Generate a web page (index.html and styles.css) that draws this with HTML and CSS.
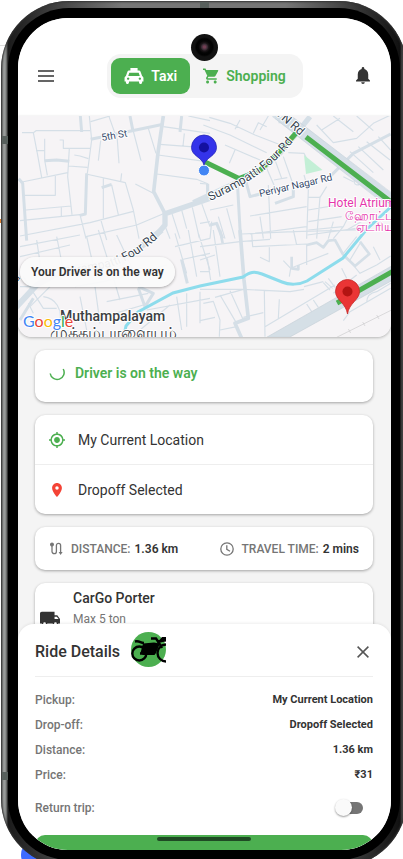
FILE: index.html
```html
<!DOCTYPE html>
<html lang="en">
<head>
<meta charset="utf-8">
<meta name="viewport" content="width=device-width, initial-scale=1">
<title>Taxi ride</title>
<link rel="stylesheet" href="styles.css">
</head>
<body>
<div class="blob"></div>
<div class="phone">
<span class="band band-top"></span><span class="band band-left"></span><span class="band band-low"></span>
<div class="bezel">
<main class="screen">
  <header class="topbar">
    <button class="icon-btn" aria-label="Menu"><svg width="16" height="12" viewBox="0 0 16 12"><path d="M0 1h16M0 6h16M0 11h16" stroke="#333" stroke-width="1.700"/></svg></button>
    <nav class="switch">
      <button class="tab active"><svg width="20" height="18" viewBox="0 0 22 20" fill="#fff"><path fill-rule="evenodd" d="M7 1h8v3h1.400c1 0 1.600.6 2 1.600L20 10c1 .5 1.500 1.300 1.500 2.500V16H20v1.200c0 2.200-3.400 2.200-3.400 0V16H5.400v1.200c0 2.200-3.400 2.200-3.400 0V16H.5v-3.500C.5 11.300 1 10.500 2 10l1.600-4.400C4 4.600 4.600 4 5.600 4H7zM5.800 6.500 4.600 10h12.800l-1.200-3.500zM4.500 11.700a1.300 1.300 0 1 0 .01 0zm13 0a1.300 1.300 0 1 0 .01 0z"/></svg>Taxi</button>
      <button class="tab"><svg width="16" height="16" viewBox="1 2 21 20" fill="#4caf50"><path d="M7 18c-1.100 0-1.990.9-1.990 2S5.900 22 7 22s2-.9 2-2-.9-2-2-2zM1 2v2h2l3.600 7.590-1.350 2.450c-.16.28-.25.61-.25.96 0 1.100.9 2 2 2h12v-2H7.420c-.14 0-.25-.11-.25-.25l.03-.12.9-1.630h7.450c.75 0 1.410-.41 1.750-1.030l3.580-6.490A1 1 0 0 0 20 4H5.210l-.94-2H1zm16 16c-1.100 0-1.990.9-1.990 2s.89 2 1.990 2 2-.9 2-2-.9-2-2-2z"/></svg>Shopping</button>
    </nav>
    <button class="icon-btn" aria-label="Notifications"><svg width="14" height="17" viewBox="4 2.500 16 19.500" fill="#333"><path d="M12 22c1.100 0 2-.9 2-2h-4c0 1.100.89 2 2 2zm6-6v-5c0-3.070-1.640-5.640-4.500-6.320V4c0-.83-.67-1.500-1.500-1.500s-1.500.67-1.500 1.500v.68C7.630 5.360 6 7.920 6 11v5l-2 2v1h16v-1l-2-2z"/></svg></button>
  </header>

  <section class="map" aria-label="Map">
    <svg class="map-art" viewBox="18 116 373 221" preserveAspectRatio="xMidYMid slice">
      <rect x="18" y="116" width="373" height="221" fill="#f6f4f6"/>
      <g fill="none" stroke="#d5dfe7" stroke-linejoin="round">
        <g transform="translate(0 110) scale(.33333)" stroke-width="3.500">
          <path d="M66 68H100L108 62H270M100 68L112 130 125 202M108 122H134M134 86V150L142 196M179 90H190V115H272M208 115L203 200 216 314M205 168L262 172M223 135L240 138 265 146M66 216L203 188M74 256H166V194M78 300L214 288M184 292V318M60 332L240 314M60 378L270 338 400 304M240 314L258 386M258 192L376 218L400 300 417 386M310 205V325M335 225L355 314M365 190L362 214M302 328L320 390M258 380L410 345 490 311M327 20L352 90 357 160M302 92L295 152M272 35L330 18M399 60L423 152M445 55L468 130M268 18L275 90 262 190M490 50L630 70M553 70L549 108M480 103L600 112M474 135L620 155M470 192L590 208 625 222M565 18L630 32M406 222L460 250M516 311L540 386M545 300L560 356M577 292L598 384M605 280L630 350M496 350L510 386"/>
          <path stroke-width="9" d="M241 18L245 66M272 88L350 72 490 43M390 18L398 58M545 18L540 66M56 206L68 220 80 392M260 190L256 312 240 316M305 233L335 223M134 152L170 150 208 154M623 222V255"/>
          <path stroke-width="11" d="M490 18L475 120 461 245 495 311"/>
          <path stroke-width="16" d="M640 262L495 311V345L455 392"/>
        </g>
        <g transform="translate(200 110) scale(.33333)" stroke-width="3.500">
          <path d="M28 22L90 40 165 75 250 108M10 45L90 75 200 128M105 120L88 160M75 105L180 150M105 58L120 30M160 70L175 38 200 50M205 18L180 60M350 45L400 98 470 85 520 40 572 15M365 60L420 25M400 18L460 65M470 18L520 62M450 125L520 188M475 110L550 180M500 95L570 150M535 80L572 120M265 128L312 130 325 155M250 140L280 225M225 150L245 205M200 175L222 225M222 210L262 203M312 195L325 240 320 386M325 262H360L380 230M325 300L440 280M325 335L425 320M325 360L430 350M360 260L350 386M400 335L385 386M150 318L320 290M150 372L320 350M180 320L190 386M205 225L212 386M0 220L20 222 22 270M30 300L100 285M0 340L30 335M35 335L30 386M55 320L75 386M80 295L105 386M430 200L460 215M465 205C455 225 480 235 485 210M440 360L510 320M400 386L430 350 450 310"/>
          <path stroke-width="9" d="M112 215L122 392M138 215L150 260 225 240M225 280L280 260V235M30 345L50 340 68 386M390 200L460 130 572 72M240 18V40"/>
          <path stroke-width="16" d="M-20 278L120 213 180 183 240 130 290 70 330 20"/>
          <path stroke-width="38" d="M228 5L580 278"/>
          <path stroke="#c6d0d8" stroke-width="1.500" d="M250 0L590 260M225 25L565 292"/>
        </g>
        <g transform="translate(0 230) scale(.33333)" stroke-width="3.500">
          <path d="M60 50L240 15M60 80L210 45M110 30L125 130M170 20L190 120M260 20L285 130M295 0L330 110 360 210M350 15L420 165M225 170L310 155 500 105M240 200L260 300M285 170L300 280M320 215L445 190M345 250L430 225M525 10L560 130M565 0L590 140M595 10L630 120M525 50L630 25M540 90L630 70M530 200L545 300M560 190V290M600 185V280M440 240L630 205M420 300L510 225M70 140L130 235H170M130 200C170 205 185 240 180 270M85 220L100 250M60 170H120M150 170L90 230"/>
          <path stroke-width="9" d="M415 170L460 190 435 230 415 175M545 90L562 160M60 270L100 205"/>
          <path stroke-width="18" d="M485 0L360 100 200 115 110 165 45 235"/>
        </g>
        <g transform="translate(200 230) scale(.33333)" stroke-width="3.500">
          <path d="M0 50L120 35 210 28M125 12L280 5 470 0M155 10L158 50 320 42M208 52V95L180 82M280 0L290 45M0 90L45 75M40 0L60 140M22 85L32 150M0 125H30M320 42V105M250 92L272 115 268 140M272 115L385 70M322 15L470 -5M0 178L130 178 270 185 312 178M45 202L130 178M60 195L110 280M90 182L130 270M10 220L40 214 60 270 58 320M0 272L45 262M193 182L195 320M195 290L405 165M238 208L235 265M130 262L190 248M60 300L110 290M370 158L390 180M375 155L398 175M385 145L405 172M320 222L335 245M340 210L355 232M312 170L370 155M435 75L480 130 530 105 572 78M450 90L480 40M430 70L470 20M520 50L540 90M425 115L440 145M400 190L470 135M430 272L450 245 572 175M500 218Q500 190 530 185L572 160"/>
          <path stroke-width="8" d="M60 0L68 40M320 45L350 38 370 52 385 32 405 30 430 75M275 80V115L295 118V105M480 35L508 72 465 108 430 75"/>
          <path stroke-width="11" d="M120 0L132 150 145 265 105 280 125 325"/>
          <path d="M200 322L575 108V152L268 322Z" fill="#d5dfe6" stroke="#c6d0d8" stroke-width="2"/>
          <path stroke="#cbcbcd" stroke-width="2" d="M410 322L575 240M445 297L452 309M488 276L495 288M530 255L537 267"/>
        </g>
      </g>
      <path d="M304 155L322.500 170 306 174Z" fill="#c3efd6"/>
      <path d="M395 203L367 229 343 258 307 281C299 285 289 285 282 282L262 274C254 271 250 272 243 277L200 286 173 293 138 312 126 326 123 340" fill="none" stroke="#8ddcec" stroke-width="3"/>
      <path d="M205 162L239 178.500 259 171 281 150 297 132M306 137L391 202M337 303L395 270" fill="none" stroke="#4caf50" stroke-width="5"/>
      <path id="surampatti" d="M210 201Q248 184 268 167T300 132" fill="none"/>
      <path id="four" d="M54 278L110 267Q134 260 158 238" fill="none"/>
      <g class="road-text">
        <text><textPath href="#surampatti">Surampatti Four Rd</textPath></text>
        <text text-anchor="end"><textPath href="#four" startOffset="100%">Surampatti Four Rd</textPath></text>
        <text class="vn" transform="translate(275 114) rotate(41)">VN Rd</text>
        <text class="small" transform="translate(102 141) rotate(-10)">5th St</text>
        <text class="small" transform="translate(260 197) rotate(-13)">Periyar Nagar Rd</text>
        <text class="small" transform="translate(13 287) rotate(-50)">Rd</text>
      </g>
      <g class="hotel-text"><text x="328" y="207">Hotel Atrium</text><text x="345" y="220">ஹோட்டல்</text><text x="356" y="231">ஏட்ரியம்</text></g>
      <g class="place-text"><text x="60" y="321">Muthampalayam</text><text class="tamil" x="50" y="338">முத்தம்பாளையம்</text></g>
      <text class="google" x="23" y="327"><tspan fill="#4285f4">G</tspan><tspan fill="#ea4335">o</tspan><tspan fill="#fbbc05">o</tspan><tspan fill="#4285f4">g</tspan><tspan fill="#34a853">l</tspan><tspan fill="#ea4335">e</tspan></text>
      <circle cx="204" cy="170.500" r="5.500" fill="#4285f4" stroke="#fff"/>
      <path d="M204 165C202 157 191.500 156 191.500 147.500a12.500 12.500 0 0 1 25 0C216.500 156 206 157 204 165Z" fill="#3433ea" stroke="#2524b8" stroke-width=".8"/><circle cx="204" cy="147.500" r="5" fill="#1410a0"/>
      <path d="M347.500 314C346 303 335.500 300 335.500 291.500a12 12 0 0 1 24 0C359.500 300 349 303 347.500 314Z" fill="#ea3535" stroke="#c52828" stroke-width=".8"/><circle cx="347.500" cy="291.500" r="5" fill="#b31412"/>
    </svg>
    <p class="toast">Your Driver is on the way</p>
  </section>

  <div class="cards">
    <section class="card status"><svg width="16" height="16" viewBox="0 0 16 16" fill="none" stroke="#4caf50" stroke-width="1.500"><path d="M1.200 8.500A7 7 0 1 0 14.200 4"/></svg><strong>Driver is on the way</strong></section>
    <section class="card places">
      <div class="place"><svg width="16" height="16" viewBox="1 1 22 22" fill="#4caf50"><path d="M12 8c-2.210 0-4 1.790-4 4s1.790 4 4 4 4-1.790 4-4-1.790-4-4-4zm8.940 3A8.994 8.994 0 0 0 13 3.060V1h-2v2.060A8.994 8.994 0 0 0 3.060 11H1v2h2.060A8.994 8.994 0 0 0 11 20.940V23h2v-2.060A8.994 8.994 0 0 0 20.940 13H23v-2h-2.060zM12 19c-3.870 0-7-3.130-7-7s3.130-7 7-7 7 3.130 7 7-3.130 7-7 7z"/></svg>My Current Location</div>
      <div class="place"><svg width="16" height="14" viewBox="1 2 22 20" fill="#f44336"><path d="M12 2C8.130 2 5 5.130 5 9c0 5.250 7 13 7 13s7-7.750 7-13c0-3.870-3.130-7-7-7zm0 9.500a2.500 2.500 0 1 1 0-5 2.500 2.500 0 0 1 0 5z"/></svg>Dropoff Selected</div>
    </section>
    <section class="card stats">
      <div class="stat"><svg width="14" height="14" viewBox="0 0 14 14" fill="none" stroke="#757575" stroke-width="1.300"><path d="M3 4V9.500a2.200 2.200 0 0 0 4.400 0V3.500a2.100 2.100 0 0 1 4.200 0V10"/><circle cx="3" cy="2.500" r="1.300" fill="#757575"/><path d="M9.600 10h4L11.600 13z" fill="#757575" stroke="none"/><path d="M1.500 2.500h3"/></svg><span>DISTANCE:</span><b>1.36 km</b></div>
      <div class="stat"><svg width="14" height="14" viewBox="0 0 14 14" fill="none" stroke="#757575" stroke-width="1.300"><circle cx="7" cy="7" r="6.200"/><path d="M6.800 3.200V7.400L10 9.300"/></svg><span>TRAVEL TIME:</span><b>2 mins</b></div>
    </section>
    <section class="card vehicle"><svg width="20" height="16" viewBox="1 4 22 16" fill="#333"><path d="M20 8h-3V4H3c-1.100 0-2 .9-2 2v11h2c0 1.660 1.340 3 3 3s3-1.340 3-3h6c0 1.660 1.340 3 3 3s3-1.340 3-3h2v-5l-3-4zM6 18.500a1.500 1.500 0 1 1 0-3 1.500 1.500 0 0 1 0 3zm13.500-9 1.960 2.500H17V9.500h2.500zM18 18.500a1.500 1.500 0 1 1 0-3 1.500 1.500 0 0 1 0 3z"/></svg><div><h3>CarGo Porter</h3><p>Max 5 ton</p></div></section>
  </div>

  <section class="sheet">
    <header class="sheet-head"><h2>Ride Details</h2>
      <svg class="bike" width="35" height="35" viewBox="0 0 35 35"><circle cx="17.500" cy="17.500" r="17.500" fill="#4caf50"/><g fill="none" stroke="#000" stroke-width="2.400"><circle cx="8.300" cy="21.500" r="7"/><path d="M35 12.500A8 8 0 0 0 35 29.500M4 9.500C9 8.500 9 11 13 11M20 6.500H25L28 11 31 16M26 10L34.500 8M9 21.500H19"/></g><path d="M12 11.500 23 10.500 29 11.500 25 21 23.500 23H12L9.500 21Z"/><path d="M26 8C29 9 29 7 31 5H35V9.500H28Z"/></svg>
      <button class="icon-btn close" aria-label="Close"><svg width="12" height="12" viewBox="0 0 12 12"><path d="M.6.6 11.400 11.400M11.400.6.6 11.400" stroke="#555" stroke-width="1.500"/></svg></button>
    </header>
    <dl class="details">
      <div><dt>Pickup:</dt><dd>My Current Location</dd></div>
      <div><dt>Drop-off:</dt><dd>Dropoff Selected</dd></div>
      <div><dt>Distance:</dt><dd>1.36 km</dd></div>
      <div><dt>Price:</dt><dd>₹31</dd></div>
    </dl>
    <div class="return"><label for="return">Return trip:</label><input id="return" type="checkbox" role="switch"></div>
    <button class="confirm" aria-label="Confirm ride"></button>
  </section>
  <span class="home-bar"></span>
  <span class="camera"></span>
</main>
</div>
</div>
</body>
</html>
```
FILE: styles.css
```css
* { box-sizing: border-box; }

html, body { height: 100%; }

body {
  margin: 0;
  overflow: hidden;
  position: relative;
  background:
    linear-gradient(#e08030, #e08030) 0 219px / 1px 4px no-repeat,
    linear-gradient(#ddd, #ddd) 0 45px / 6px 1px no-repeat,
    #fff;
  color: #333;
  font-family: Roboto, "Noto Sans", sans-serif;
  font-size: 14px;
}

h2, h3, p, dl, dd { margin: 0; }
h2, h3 { font-weight: 500; }
strong, b { font-weight: 600; }
button { border: 0; padding: 0; background: none; font: inherit; color: inherit; }
svg { display: block; flex: none; }

.blob {
  position: absolute;
  left: 21px;
  bottom: -10px;
  width: 28px;
  height: 28px;
  border-radius: 50%;
  background: #3d6bff;
}

/* Device frame: it runs a little past the right and bottom window edges. */
.phone {
  position: relative;
  height: calc(100vh + 7px);
  margin: 1px -4px 0 1px;
  padding: 7px;
  border-radius: 68px;
  background: linear-gradient(90deg, #666 0, #a0a3a2 3px, #858786 5px, #1b1b1b 7px, #777 30%, #777 70%, #111 calc(100% - 7px), #444 calc(100% - 5px), #161616 100%);
  box-shadow: inset 0 0 2px 1px #333;
}

.bezel {
  height: 100%;
  padding: 10px 9px 10px 10px;
  border-radius: 61px;
  background: #000;
}

.band { position: absolute; background: #58605d; }
.band-top { top: 1px; left: 49%; width: 9px; height: 6px; }
.band-left { top: 135px; left: 1px; width: 6px; height: 8px; }
.band-low { top: 771px; left: 1px; width: 6px; height: 8px; }

.screen {
  position: relative;
  height: 100%;
  overflow: hidden;
  border-radius: 50px;
  background: #f4f4f4;
}

.topbar {
  display: flex;
  align-items: center;
  justify-content: space-between;
  height: 98px;
  padding: 17px 21px 0 20px;
  background: #fff;
}

.icon-btn { display: grid; place-items: center; }

.switch {
  display: flex;
  padding: 4px;
  border-radius: 14px;
  background: #f4f4f4;
}

.tab {
  display: flex;
  align-items: center;
  gap: 7px;
  height: 36px;
  padding: 0 13px;
  border-radius: 9px;
  color: #4caf50;
  font-weight: 600;
}

.active { background: #4caf50; color: #fff; }

.map {
  position: relative;
  overflow: hidden;
  border-radius: 0 0 14px 14px;
  box-shadow: 0 1px 3px #0004;
}

.map-art { width: 100%; height: auto; }

.map text {
  paint-order: stroke;
  stroke: #fff;
  stroke-width: 2px;
  stroke-linejoin: round;
}

.road-text { fill: #374552; font-size: 12px; font-weight: 400; }
.road-text .small { fill: #364a6b; font-size: 10px; }
.hotel-text { fill: #e535ab; font-size: 12px; }
.place-text { fill: #3c4043; font-size: 14px; font-weight: 500; }
.place-text .tamil { font-size: 16px; font-weight: 400; }
.map .google { font-family: Lato, sans-serif; font-size: 16px; }

.toast {
  position: absolute;
  left: 2px;
  top: 141px;
  padding: 0 11px;
  border-radius: 15px;
  background: #fafafaf0;
  box-shadow: 0 1px 3px #0005;
  font-size: 12px;
  font-weight: 600;
  line-height: 30px;
}

.cards {
  display: flex;
  flex-direction: column;
  gap: 13px;
  padding: 13px 18px 0 17px;
}

.card {
  border-radius: 10px;
  background: #fff;
  box-shadow: 0 1px 3px #0005;
}

.status {
  display: flex;
  align-items: center;
  gap: 10px;
  height: 52px;
  padding: 0 14px 6px;
  color: #4caf50;
}

.place {
  display: flex;
  align-items: center;
  gap: 13px;
  height: 49px;
  padding: 0 14px;
}
.place + .place { height: 50px; border-top: 1px solid #eee; }

.stats {
  display: flex;
  align-items: center;
  justify-content: space-between;
  height: 43px;
  padding: 0 14px;
  font-size: 12px;
}

.stat { display: flex; align-items: center; gap: 4px; }
.stat svg { margin-right: 4px; }
.stat span { color: #757575; font-weight: 500; }

.vehicle {
  display: flex;
  gap: 13px;
  height: 80px;
  padding: 5px;
}
.vehicle svg { margin-top: 23px; }
.vehicle h3 { font-size: 14px; line-height: 20px; }
.vehicle p { margin-top: 2px; color: #757575; font-size: 12px; line-height: 18px; }

.sheet {
  position: absolute;
  inset: auto 0 -33px;
  padding: 0 18px 0 17px;
  border-radius: 16px 16px 0 0;
  background: #fff;
  box-shadow: 0 -1px 3px #0001;
}

.sheet-head {
  display: flex;
  align-items: center;
  gap: 11px;
  height: 53px;
  padding-top: 3px;
  border-bottom: 1px solid #eee;
}
.sheet-head h2 { font-size: 16px; }
.bike { margin-bottom: 4px; }
.close { margin-left: auto; padding: 4px; }

.details { padding: 10px 0 3px; font-size: 12px; }
.details div, .return {
  display: flex;
  align-items: center;
  justify-content: space-between;
}
.details div { height: 25px; }
.details dt, .return label { color: #757575; font-weight: 500; }
.details dd { font-size: 11px; font-weight: 700; }

.return { height: 45px; padding: 0 10px 10px 0; font-size: 12px; }

.return input {
  appearance: none;
  display: flex;
  align-items: center;
  width: 26px;
  height: 12px;
  margin: 0;
  border-radius: 6px;
  background: #757575;
}
.return input::before {
  content: "";
  width: 17px;
  height: 17px;
  flex: none;
  margin-left: -2px;
  border-radius: 50%;
  background: #fafafa;
  box-shadow: 0 1px 2px #0006;
}

.confirm {
  display: block;
  width: 100%;
  height: 48px;
  border-radius: 10px;
  background: #4caf50;
}

.home-bar {
  position: absolute;
  bottom: 9px;
  left: 50%;
  width: 94px;
  height: 4px;
  margin-left: -48px;
  border-radius: 2px;
  background: #1f4a24;
}

.camera {
  position: absolute;
  top: 16px;
  left: 50%;
  width: 27px;
  height: 27px;
  margin-left: -14px;
  border-radius: 50%;
  background: radial-gradient(circle at 50% 48%, #734054 0 1px, #382c35 3px, #1c1518 4px, #050505 6px, #020202 8px, #121212 10px);
}
```
